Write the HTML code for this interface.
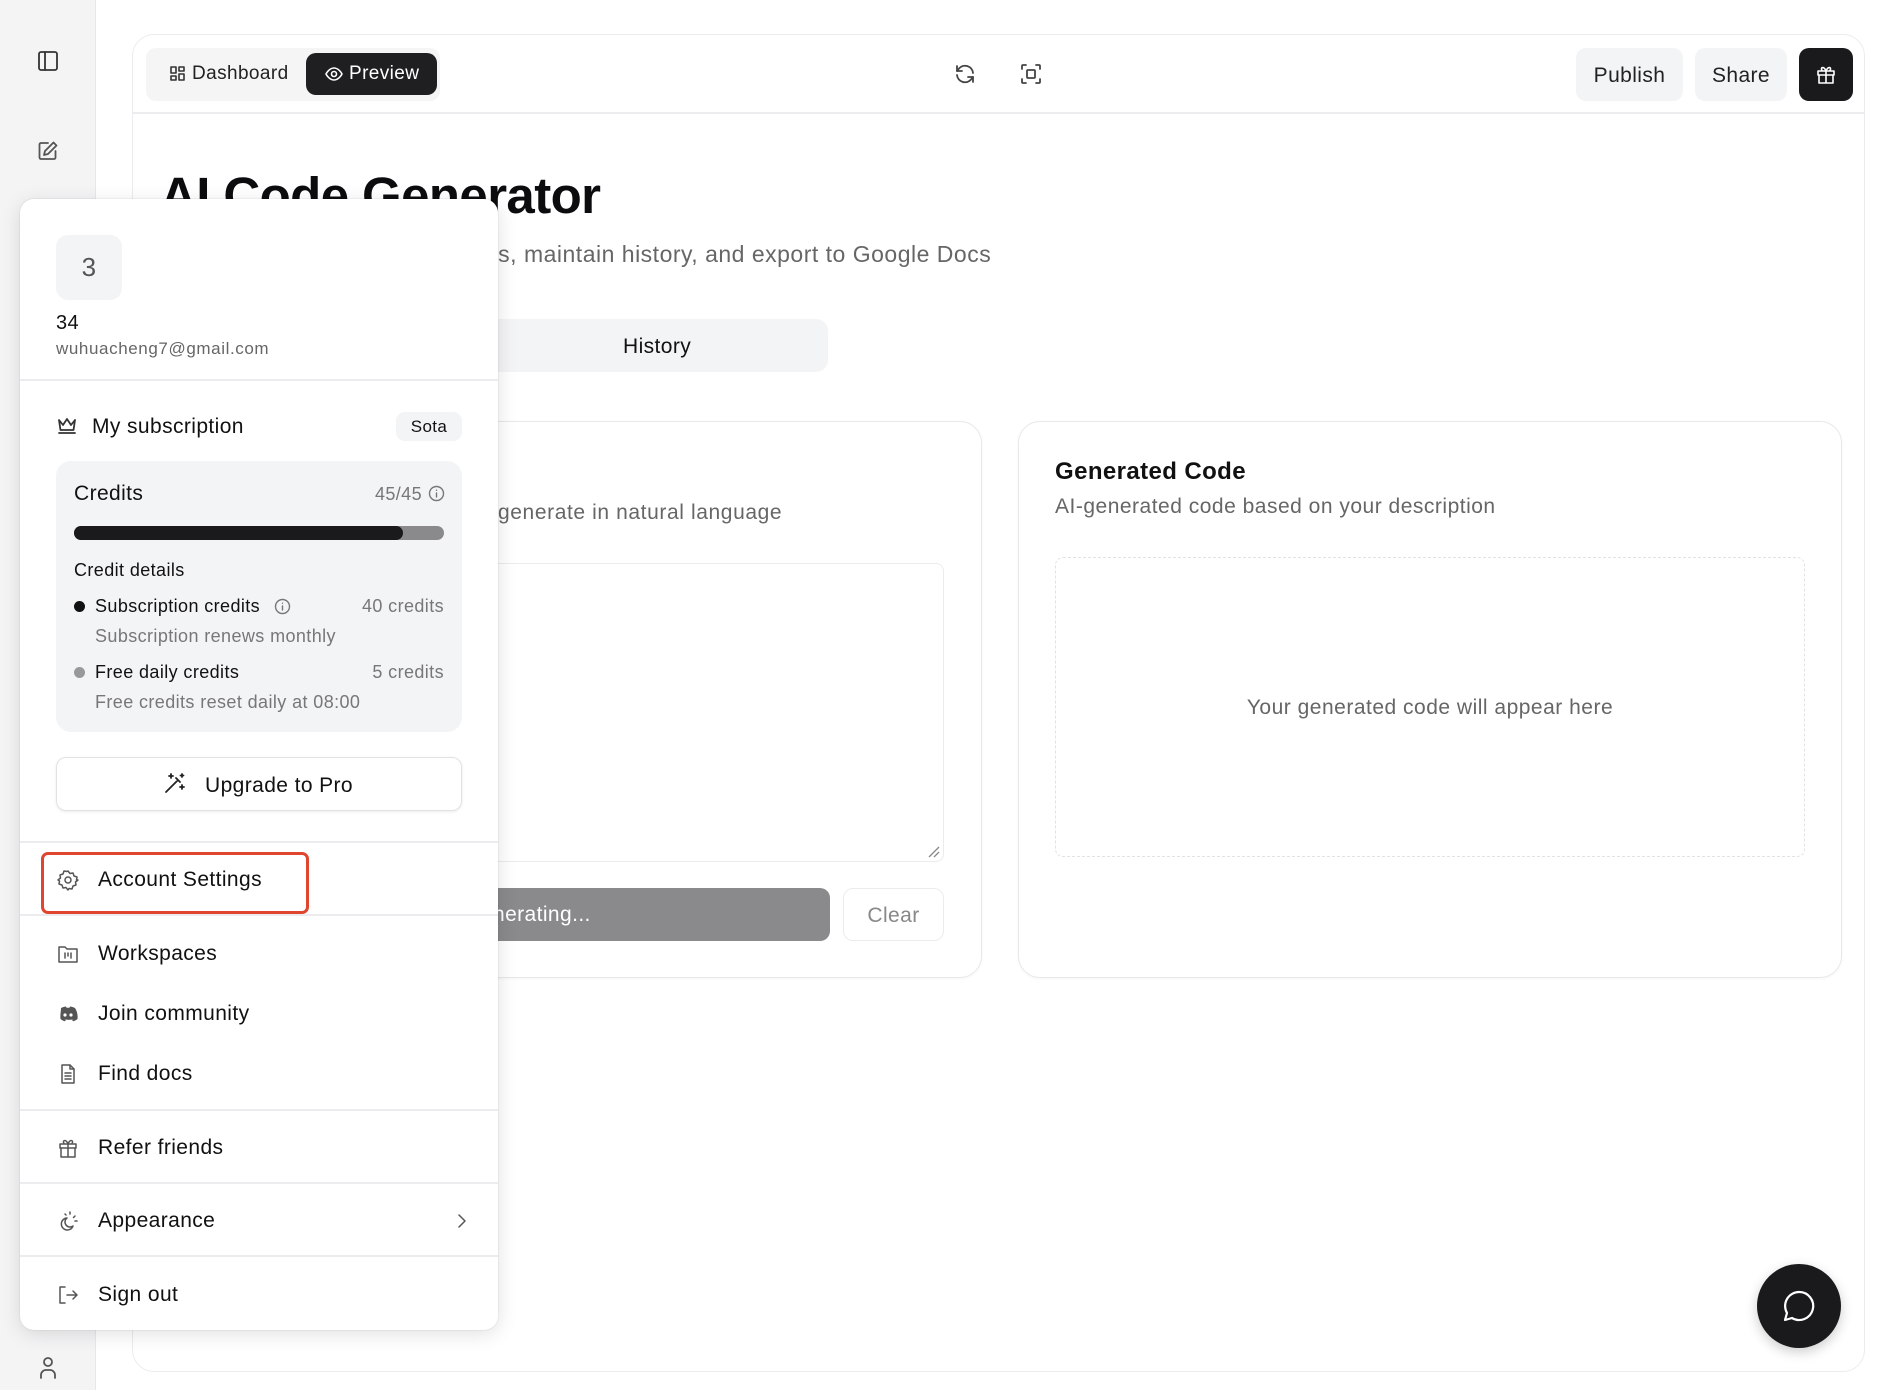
<!DOCTYPE html>
<html><head><meta charset="utf-8"><style>
*{box-sizing:border-box;margin:0;padding:0}
body{width:1880px;height:1390px;position:relative;overflow:hidden;background:#fff;font-family:"Liberation Sans",sans-serif;color:#111;letter-spacing:0.4px}
.a{position:absolute}
.ic{position:absolute;fill:none;stroke:#333;stroke-width:1.8;stroke-linecap:round;stroke-linejoin:round}
.row{position:absolute;left:0;width:478px;font-size:21px;color:#111}
.row span{position:absolute;left:78px;top:-12px;line-height:24px}
.row svg{position:absolute;left:37px;top:-11px}
.div{position:absolute;left:0;width:478px;height:2px;background:#ececee}
</style></head><body>
<div class="a" style="left:0;top:0;width:96px;height:1390px;background:#f4f4f5;border-right:1px solid #e8e8ea"></div>
<svg class="ic" style="left:37px;top:50px" width="22" height="22" viewBox="0 0 22 22"><rect x="2" y="2" width="18" height="18" rx="2"/><line x1="8" y1="2" x2="8" y2="20"/></svg>
<svg class="ic" style="left:37px;top:140px;stroke:#555" width="22" height="22" viewBox="0 0 22 22"><path d="M11 3H4a1.5 1.5 0 0 0-1.5 1.5v13A1.5 1.5 0 0 0 4 19h13a1.5 1.5 0 0 0 1.5-1.5V11"/><path d="M16.5 2.5l3 3L11 14l-4 1 1-4z"/></svg>
<svg class="ic" style="left:38px;top:1356px;stroke:#555" width="20" height="24" viewBox="0 0 20 24"><circle cx="10" cy="6" r="4"/><path d="M3 22v-3a5 5 0 0 1 5-5h4a5 5 0 0 1 5 5v3"/></svg>

<div class="a" style="left:132px;top:34px;width:1733px;height:1338px;border:1px solid #ececee;border-radius:22px;background:#fff"></div>
<div class="a" style="left:133px;top:112px;width:1731px;height:2px;background:#ececee"></div>
<div class="a" style="left:146px;top:48px;width:294px;height:53px;background:#f5f5f6;border-radius:10px"></div>
<svg class="ic" style="left:170px;top:66px;stroke-width:1.6" width="16" height="16" viewBox="0 0 16 16"><rect x="1" y="1" width="5" height="6"/><rect x="9" y="1" width="5" height="4"/><rect x="1" y="10" width="5" height="4"/><rect x="9" y="8" width="5" height="6"/></svg>
<div class="a" style="left:192px;top:63px;font-size:19px;color:#222">Dashboard</div>
<div class="a" style="left:306px;top:53px;width:131px;height:42px;background:#1f1f22;border-radius:10px"></div>
<svg class="ic" style="left:325px;top:66px;stroke:#fff;stroke-width:1.6" width="18" height="16" viewBox="0 0 18 16"><path d="M1 8s3-6 8-6 8 6 8 6-3 6-8 6-8-6-8-6z"/><circle cx="9" cy="8" r="2.5"/></svg>
<div class="a" style="left:349px;top:63px;font-size:19px;color:#fff">Preview</div>
<svg class="ic" style="left:953px;top:62px;stroke:#444" width="24" height="24" viewBox="0 0 24 24"><path d="M20 11a8 8 0 0 0-14-4.5L4 9"/><path d="M4 4v5h5"/><path d="M4 13a8 8 0 0 0 14 4.5l2-2.5"/><path d="M20 20v-5h-5"/></svg>
<svg class="ic" style="left:1019px;top:62px;stroke:#444" width="24" height="24" viewBox="0 0 24 24"><path d="M3 7V4a1 1 0 0 1 1-1h3M17 3h3a1 1 0 0 1 1 1v3M21 17v3a1 1 0 0 1-1 1h-3M7 21H4a1 1 0 0 1-1-1v-3"/><rect x="8" y="8" width="8" height="8" rx="1"/></svg>
<div class="a" style="left:1576px;top:48px;width:107px;height:53px;background:#f3f4f5;border-radius:10px;font-size:21px;line-height:55px;text-align:center;color:#222">Publish</div>
<div class="a" style="left:1695px;top:48px;width:92px;height:53px;background:#f3f4f5;border-radius:10px;font-size:21px;line-height:55px;text-align:center;color:#222">Share</div>
<div class="a" style="left:1799px;top:48px;width:54px;height:53px;background:#1a1a1d;border-radius:10px"></div>
<svg class="ic" style="left:1815px;top:63px;stroke:#fff;stroke-width:1.6" width="22" height="22" viewBox="0 0 22 22"><rect x="3" y="8" width="16" height="4"/><path d="M4 12v8h14v-8M11 8v12"/><path d="M11 8C9 3 5 4 7 7.5M11 8c2-5 6-4 4-0.5"/></svg>

<div class="a" style="left:160px;top:166px;font-size:51px;font-weight:bold;letter-spacing:-0.6px;color:#0c0c0e">AI Code Generator</div>
<div class="a" style="left:161px;top:241px;font-size:23px;letter-spacing:0.5px;color:#666">Generate code from descriptions, maintain history, and export to Google Docs</div>
<div class="a" style="left:161px;top:319px;width:667px;height:53px;background:#f3f4f6;border-radius:12px"></div>
<div class="a" style="left:167px;top:324px;width:325px;height:43px;background:#fff;border-radius:9px"></div>
<div class="a" style="left:623px;top:335px;font-size:21px;color:#111">History</div>

<div class="a" style="left:161px;top:421px;width:821px;height:557px;border:1.5px solid #e8e8ea;border-radius:22px;box-shadow:0 1px 3px rgba(0,0,0,.04)"></div>
<div class="a" style="left:498px;top:501px;font-size:21px;letter-spacing:0.6px;color:#666">generate in natural language</div>
<div class="a" style="left:190px;top:563px;width:754px;height:299px;border:1px solid #ececee;border-radius:8px"></div>
<svg class="a" style="left:925px;top:843px" width="16" height="16"><path d="M14 4L4 14M14 9l-5 5" stroke="#888" stroke-width="1.3"/></svg>
<div class="a" style="left:190px;top:888px;width:640px;height:53px;background:#8a8a8c;border-radius:10px"></div>
<div class="a" style="left:493px;top:903px;font-size:21px;color:#fff">nerating...</div>
<div class="a" style="left:843px;top:888px;width:101px;height:53px;border:1px solid #ececee;border-radius:10px;font-size:21px;line-height:53px;text-align:center;color:#888">Clear</div>

<div class="a" style="left:1018px;top:421px;width:824px;height:557px;border:1.5px solid #e8e8ea;border-radius:22px;box-shadow:0 1px 3px rgba(0,0,0,.04)"></div>
<div class="a" style="left:1055px;top:458px;font-size:24px;font-weight:bold;color:#111">Generated Code</div>
<div class="a" style="left:1055px;top:495px;font-size:21px;letter-spacing:0.5px;color:#666">AI-generated code based on your description</div>
<div class="a" style="left:1055px;top:557px;width:750px;height:300px;border:1px dashed #e2e2e4;border-radius:8px"></div>
<div class="a" style="left:1055px;top:696px;width:750px;text-align:center;font-size:21px;letter-spacing:0.5px;color:#666">Your generated code will appear here</div>

<div class="a" style="left:1757px;top:1264px;width:84px;height:84px;border-radius:50%;background:#1a1a1d;box-shadow:0 4px 12px rgba(0,0,0,.2)"></div>
<svg class="ic" style="left:1782px;top:1289px;stroke:#fff;stroke-width:2.2" width="34" height="34" viewBox="0 0 34 34"><path d="M17 3a14 14 0 1 1-7 26L3 31l2-7A14 14 0 0 1 17 3z"/></svg>

<div class="a" style="left:20px;top:199px;width:478px;height:1131px;background:#fff;border-radius:14px;box-shadow:0 4px 20px rgba(0,0,0,.12),0 0 0 1px rgba(0,0,0,.04)">
 <div class="a" style="left:36px;top:36px;width:66px;height:65px;background:#f3f4f6;border-radius:12px;font-size:26px;line-height:65px;text-align:center;color:#555">3</div>
 <div class="a" style="left:36px;top:113px;font-size:20px">34</div>
 <div class="a" style="left:36px;top:140px;font-size:17px;letter-spacing:0.6px;color:#666">wuhuacheng7@gmail.com</div>
 <div class="div" style="top:180px"></div>
 <svg class="ic" style="left:36px;top:217px" width="22" height="20" viewBox="0 0 22 20"><path d="M3 4l4 5 4-6 4 6 4-5-1.5 10h-13z"/><line x1="3" y1="17" x2="19" y2="17"/></svg>
 <div class="a" style="left:72px;top:216px;font-size:21px">My subscription</div>
 <div class="a" style="left:376px;top:213px;width:66px;height:29px;background:#f3f4f6;border-radius:9px;font-size:17px;line-height:29px;text-align:center">Sota</div>
 <div class="a" style="left:36px;top:262px;width:406px;height:271px;background:#f3f4f6;border-radius:15px">
  <div class="a" style="left:18px;top:21px;font-size:21px">Credits</div>
  <div class="a" style="right:40px;top:23px;font-size:18px;color:#777">45/45</div>
  <svg class="ic" style="right:17px;top:24px;stroke:#777;stroke-width:1.4" width="17" height="17" viewBox="0 0 17 17"><circle cx="8.5" cy="8.5" r="7"/><path d="M8.5 8v4M8.5 5.2v.1"/></svg>
  <div class="a" style="left:18px;top:65px;width:370px;height:14px;background:#8a8a8c;border-radius:7px"></div>
  <div class="a" style="left:18px;top:65px;width:329px;height:14px;background:#1a1a1d;border-radius:7px"></div>
  <div class="a" style="left:18px;top:99px;font-size:18px">Credit details</div>
  <div class="a" style="left:18px;top:140px;width:11px;height:11px;border-radius:50%;background:#111"></div>
  <div class="a" style="left:39px;top:135px;font-size:18px">Subscription credits</div>
  <svg class="ic" style="left:218px;top:137px;stroke:#777;stroke-width:1.4" width="17" height="17" viewBox="0 0 17 17"><circle cx="8.5" cy="8.5" r="7"/><path d="M8.5 8v4M8.5 5.2v.1"/></svg>
  <div class="a" style="right:18px;top:135px;font-size:18px;color:#777">40 credits</div>
  <div class="a" style="left:39px;top:165px;font-size:18px;color:#777">Subscription renews monthly</div>
  <div class="a" style="left:18px;top:206px;width:11px;height:11px;border-radius:50%;background:#999"></div>
  <div class="a" style="left:39px;top:201px;font-size:18px">Free daily credits</div>
  <div class="a" style="right:18px;top:201px;font-size:18px;color:#777">5 credits</div>
  <div class="a" style="left:39px;top:231px;font-size:18px;color:#777">Free credits reset daily at 08:00</div>
 </div>
 <div class="a" style="left:36px;top:558px;width:406px;height:54px;border:1px solid #e2e2e4;border-radius:10px;box-shadow:0 1px 3px rgba(0,0,0,.08)"></div>
 <svg class="ic" style="left:143px;top:572px;stroke:#222" width="24" height="24" viewBox="0 0 24 24"><path d="M3 21L15 9M13 7l4 4M8 3v4M6 5h4M19 3v3M17.5 4.5h3M19 14v4M17 16h4"/></svg>
 <div class="a" style="left:185px;top:575px;font-size:21px">Upgrade to Pro</div>
 <div class="div" style="top:642px"></div>
 <div class="row" style="top:681px"><svg class="ic" width="22" height="22" viewBox="0 0 22 22" style="stroke:#555;stroke-width:1.5;left:37px;top:-11px"><circle cx="11" cy="11" r="3"/><path d="M11 2l2 2.5 3-.5 1 3 3 1-.5 3L21 11l-2.5 2 .5 3-3 1-1 3-3-.5L11 21l-2-2.5-3 .5-1-3-3-1 .5-3L1 11l2.5-2L3 6l3-1 1-3 3 .5z"/></svg><span>Account Settings</span></div>
 <div class="a" style="left:21px;top:653px;width:268px;height:62px;border:3.5px solid #e0452f;border-radius:7px"></div>
 <div class="div" style="top:715px"></div>
 <div class="row" style="top:755px"><svg class="ic" width="22" height="22" viewBox="0 0 22 22" style="stroke:#555;stroke-width:1.5;left:37px;top:-11px"><path d="M2 4h6l2 2h10v13H2z"/><path d="M8 10v5M11 10v3M14 10v5"/></svg><span>Workspaces</span></div>
 <div class="row" style="top:815px"><svg width="22" height="22" viewBox="0 0 22 22" style="position:absolute;left:37px;top:-11px"><path d="M4 5c2-1 4-1.5 5-1.5l.6 1.2h2.8L13 3.5c1 0 3 .5 5 1.5 2 3 3 7 2.5 11-1.5 1.2-3 2-4.5 2.2l-1-1.5c1-.3 1.5-.6 2-1-3 1.5-7 1.5-10 0 .5.4 1 .7 2 1l-1 1.5C6.5 18 5 17.2 3.5 16 3 12 4 8 4 5z" fill="#555"/><circle cx="8" cy="12" r="1.6" fill="#fff"/><circle cx="14" cy="12" r="1.6" fill="#fff"/></svg><span>Join community</span></div>
 <div class="row" style="top:875px"><svg class="ic" width="22" height="22" viewBox="0 0 22 22" style="stroke:#555;stroke-width:1.5;left:37px;top:-11px"><path d="M5 2h8l4 4v14H5z"/><path d="M13 2v4h4M8 10h6M8 13h6M8 16h6"/></svg><span>Find docs</span></div>
 <div class="div" style="top:910px"></div>
 <div class="row" style="top:949px"><svg class="ic" width="22" height="22" viewBox="0 0 22 22" style="stroke:#555;stroke-width:1.5;left:37px;top:-11px"><rect x="3" y="7" width="16" height="4"/><path d="M4 11v9h14v-9M11 7v13"/><path d="M11 7C9 2 5 3 7 6.5M11 7c2-5 6-4 4-.5"/></svg><span>Refer friends</span></div>
 <div class="div" style="top:983px"></div>
 <div class="row" style="top:1022px"><svg class="ic" width="22" height="22" viewBox="0 0 22 22" style="stroke:#555;stroke-width:1.5;left:37px;top:-11px"><path d="M10 8a6 6 0 1 0 6 8 5 5 0 0 1-6-8z"/><path d="M13 2v2M18 6l-1.5 1.5M20 11h-2M8 4l1 1"/></svg><span>Appearance</span><svg class="ic" width="12" height="16" viewBox="0 0 12 16" style="left:436px;top:-8px;stroke:#555;stroke-width:1.5"><path d="M3 2l6 6-6 6"/></svg></div>
 <div class="div" style="top:1056px"></div>
 <div class="row" style="top:1096px"><svg class="ic" width="22" height="22" viewBox="0 0 22 22" style="stroke:#555;stroke-width:1.5;left:37px;top:-11px"><path d="M8 3H3v16h5M10 11h10M16 7l4 4-4 4"/></svg><span>Sign out</span></div>
</div>
</body></html>
